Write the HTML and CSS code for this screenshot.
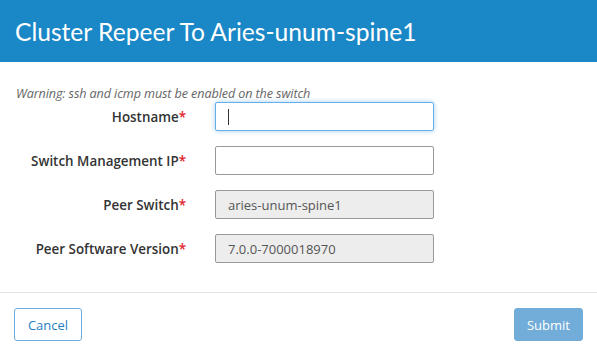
FILE: index.html
```html
<!DOCTYPE html>
<html lang="en">
<head>
    <meta charset="UTF-8">
    <meta name="viewport" content="width=device-width, initial-scale=1.0">
    <title>Cluster Repeer</title>
    <link rel="stylesheet" href="styles.css">
</head>
<body>
    <div class="modal">
        <div class="modal-header">
            <h1>Cluster Repeer To Aries-unum-spine1</h1>
        </div>
        <div class="modal-body">
            <p class="warning">Warning: ssh and icmp must be enabled on the switch</p>
            <div class="form-row">
                <label for="hostname">Hostname<span class="req">*</span></label>
                <div class="field-wrap">
                    <input type="text" id="hostname" class="field focused">
                    <span class="caret"></span>
                </div>
            </div>
            <div class="form-row">
                <label for="mgmt-ip">Switch Management IP<span class="req">*</span></label>
                <div class="field-wrap">
                    <input type="text" id="mgmt-ip" class="field">
                </div>
            </div>
            <div class="form-row">
                <label for="peer-switch">Peer Switch<span class="req">*</span></label>
                <div class="field-wrap">
                    <input type="text" id="peer-switch" class="field" value="aries-unum-spine1" disabled>
                </div>
            </div>
            <div class="form-row">
                <label for="peer-version">Peer Software Version<span class="req">*</span></label>
                <div class="field-wrap">
                    <input type="text" id="peer-version" class="field" value="7.0.0-7000018970" disabled>
                </div>
            </div>
        </div>
        <div class="modal-footer">
            <button class="btn btn-cancel">Cancel</button>
            <button class="btn btn-submit" disabled>Submit</button>
        </div>
    </div>
</body>
</html>
```

FILE: styles.css
```css
body {
    margin: 0;
    font-family: "Open Sans", sans-serif;
    background-color: white;
    color: #333;
}
.modal {
    width: 597px;
    height: 351px;
    display: flex;
    flex-direction: column;
}
.modal-header {
    background-color: #1a87c7;
    height: 62px;
    display: flex;
    align-items: center;
    padding: 0 15px;
    box-sizing: border-box;
}
.modal-header h1 {
    margin: 0;
    font-family: Lato, sans-serif;
    font-size: 24.6px;
    font-weight: normal;
    color: white;
    padding-top: 1px;
}
.modal-body {
    padding: 24px 15px 0 16px;
    height: 231px;
    box-sizing: border-box;
    border-bottom: 1px solid #e3e3e3;
}
.warning {
    margin: 0 0 1px;
    font-size: 12.6px;
    font-style: italic;
    color: #666;
    line-height: 15px;
    letter-spacing: -0.1px;
}
.form-row {
    display: flex;
    align-items: center;
    height: 29px;
    margin-bottom: 15px;
}
.form-row label {
    width: 170px;
    text-align: right;
    font-size: 13.4px;
    font-weight: 600;
    color: #333;
    white-space: nowrap;
}
.req {
    color: #e0242b;
}
.field-wrap {
    position: relative;
    margin-left: 29px;
}
.field {
    display: block;
    width: 219px;
    height: 29px;
    box-sizing: border-box;
    border: 1px solid #999;
    border-radius: 2px;
    padding: 0 12px;
    font-family: "Open Sans", sans-serif;
    font-size: 13px;
    color: #555;
    background-color: white;
    outline: none;
}
.field:disabled {
    background-color: #ededed;
    color: #555;
}
.field.focused {
    border-color: #66afe9;
    box-shadow: 0 0 5px rgba(102, 175, 233, 0.6);
}
.caret {
    position: absolute;
    left: 13px;
    top: 7px;
    width: 1px;
    height: 16px;
    background-color: #333;
}
.modal-footer {
    display: flex;
    justify-content: space-between;
    padding: 15px 14px 0 14px;
}
.btn {
    height: 33px;
    padding: 0 10px;
    font-family: "Open Sans", sans-serif;
    font-size: 13px;
    border-radius: 3px;
    cursor: pointer;
}
.btn-cancel {
    width: 68px;
    background-color: white;
    border: 1px solid #6aaee0;
    color: #1f7fc4;
}
.btn-submit {
    width: 69px;
    background-color: #72acd9;
    border: 1px solid #72acd9;
    color: white;
}
```
